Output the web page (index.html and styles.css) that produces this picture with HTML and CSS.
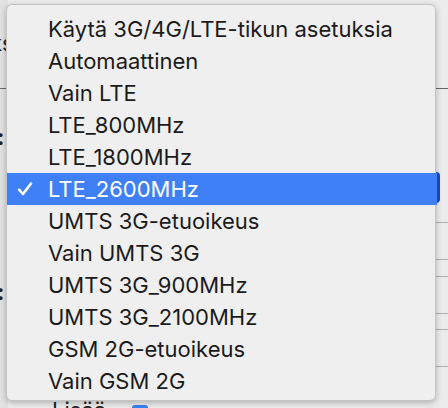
FILE: index.html
```html
<html>
<head>
<title>Verkkotila</title>
<link rel="stylesheet" href="styles.css">
</head>
<body>
<div class="window">
  <div class="back">
    <span class="back-label l1">ks</span>
    <span class="back-rule r-left"></span>
    <span class="back-colon c1">:</span>
    <span class="back-colon c2">:</span>
    <span class="back-bottom">Lisää <span class="tick-box">&#10003;</span></span>
    <span class="back-rule r-right r1"></span>
    <span class="back-line y222"></span>
    <span class="back-line y259"></span>
    <span class="back-line y276"></span>
    <span class="back-line y313"></span>
    <span class="back-line y329"></span>
    <span class="back-line y366"></span>
    <span class="popup-edge"></span>
  </div>

  <ul class="menu">
    <li class="item">Käytä 3G/4G/LTE-tikun asetuksia</li>
    <li class="item">Automaattinen</li>
    <li class="item">Vain LTE</li>
    <li class="item">LTE_800MHz</li>
    <li class="item">LTE_1800MHz</li>
    <li class="item selected">
      <svg class="check" width="16" height="16" viewBox="0 0 16 16"><path d="M2 8.6 L6 13 L14 2.5" fill="none" stroke="#fff" stroke-width="2.6" stroke-linecap="round" stroke-linejoin="round"/></svg>LTE_2600MHz
    </li>
    <li class="item">UMTS 3G-etuoikeus</li>
    <li class="item">Vain UMTS 3G</li>
    <li class="item">UMTS 3G_900MHz</li>
    <li class="item">UMTS 3G_2100MHz</li>
    <li class="item">GSM 2G-etuoikeus</li>
    <li class="item">Vain GSM 2G</li>
  </ul>
</div>
</body>
</html>
```

FILE: styles.css
```css
html, body {
  margin: 0;
  padding: 0;
}
body {
  width: 448px;
  height: 408px;
  overflow: hidden;
  background: #e8e8e8;
  font-family: 'Inter', 'Liberation Sans', sans-serif;
}
.window {
  position: relative;
  width: 448px;
  height: 408px;
}

/* window content behind the menu */
.back {
  position: absolute;
  left: 0;
  top: 0;
  width: 448px;
  height: 408px;
  background: linear-gradient(to right, #e2e2e2 0, #e2e2e2 8px, #ececec 8px);
}
.back-label, .back-colon, .back-bottom {
  position: absolute;
  color: #222;
  font-size: 22px;
}
.l1 { left: -10px; top: 30px; }
.c1 { left: -3px; top: 124px; font-weight: bold; }
.c2 { left: -3px; top: 279px; font-weight: bold; }
.back-bottom { left: 52px; top: 397px; }
.tick-box {
  display: inline-block;
  width: 16px;
  height: 16px;
  margin-left: 20px;
  background: #3a7ff5;
  color: #fff;
  font-size: 13px;
  line-height: 16px;
  text-align: center;
  border-radius: 3px;
  vertical-align: top;
  margin-top: 8px;
}
.back-rule {
  position: absolute;
  height: 1px;
  background: #666;
}
.r-left { left: 0; top: 88px; width: 8px; }
.r1 { left: 436px; top: 88px; width: 12px; }
.back-line {
  position: absolute;
  left: 436px;
  width: 12px;
  height: 1px;
  background: #b0b0b0;
}
.y222 { top: 222px; }
.y259 { top: 259px; }
.y276 { top: 276px; }
.y313 { top: 313px; }
.y329 { top: 329px; }
.y366 { top: 366px; }
.popup-edge {
  position: absolute;
  left: 428px;
  top: 172px;
  width: 12px;
  height: 31px;
  border-radius: 4px;
  background: linear-gradient(to right, #2f64e0, #1c44c8);
}

/* popup menu */
.menu {
  position: absolute;
  left: 6px;
  top: 4px;
  width: 430px;
  height: 397px;
  box-sizing: border-box;
  margin: 0;
  padding: 8px 0 0 0;
  list-style: none;
  background: #efefef;
  border-radius: 6px;
  border: 1px solid #c4c4c4;
  box-shadow: 0 2px 6px rgba(0,0,0,0.25);
  display: flex;
  flex-direction: column;
}
.item {
  position: relative;
  height: 32px;
  line-height: 32px;
  padding-left: 41px;
  font-size: 22px;
  color: #1b1b1b;
  white-space: nowrap;
}
.selected {
  background: #3f80f7;
  color: #fff;
  margin-right: -2px;
}
.check {
  position: absolute;
  left: 10px;
  top: 8px;
}
```
